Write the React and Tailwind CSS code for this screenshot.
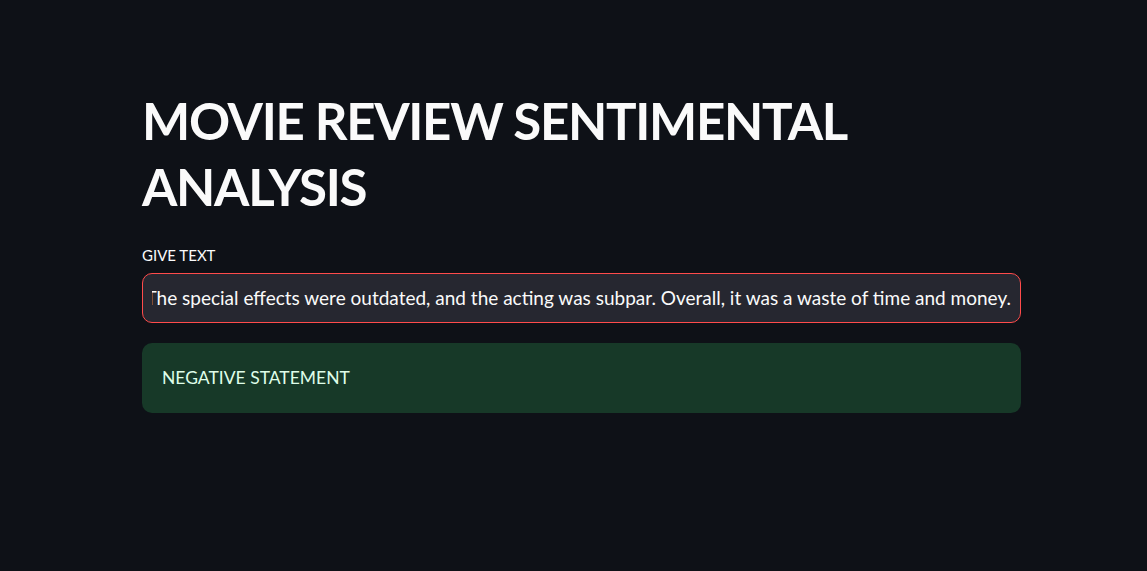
import React from "react";

const FONT = { fontFamily: "Lato, 'Noto Sans', sans-serif" };

export default function App() {
    return (
        <div className="min-h-[571px] w-full bg-[#0e1117] text-[#fafafa]" style={FONT}>
            <div className="ml-[142px] w-[879px] pt-[88px]">
                <h1 className="text-[51px] font-bold leading-[66px] tracking-[-1.3px] text-[#fafafa]">
                    MOVIE REVIEW SENTIMENTAL ANALYSIS
                </h1>
                <div className="mt-[25px]">
                    <label className="block text-[15px] leading-[20px] text-[#fafafa]">GIVE TEXT</label>
                    <div className="mt-[8px] flex h-[50px] items-center rounded-[10px] border border-[#ff4b4b] bg-[#262730] px-[9px]">
                        <div className="flex flex-1 justify-end overflow-hidden">
                            <span className="whitespace-nowrap text-[19px] text-[#fafafa]">
                                I was really disappointed with this movie. The special effects were outdated, and the acting was subpar. Overall, it was a waste of time and money.
                            </span>
                        </div>
                    </div>
                </div>
                <div className="mt-[20px] flex h-[70px] items-center rounded-[10px] bg-[#173928] px-[20px]">
                    <span className="text-[17.5px] text-[#dffde9]">NEGATIVE STATEMENT</span>
                </div>
            </div>
        </div>
    );
}
